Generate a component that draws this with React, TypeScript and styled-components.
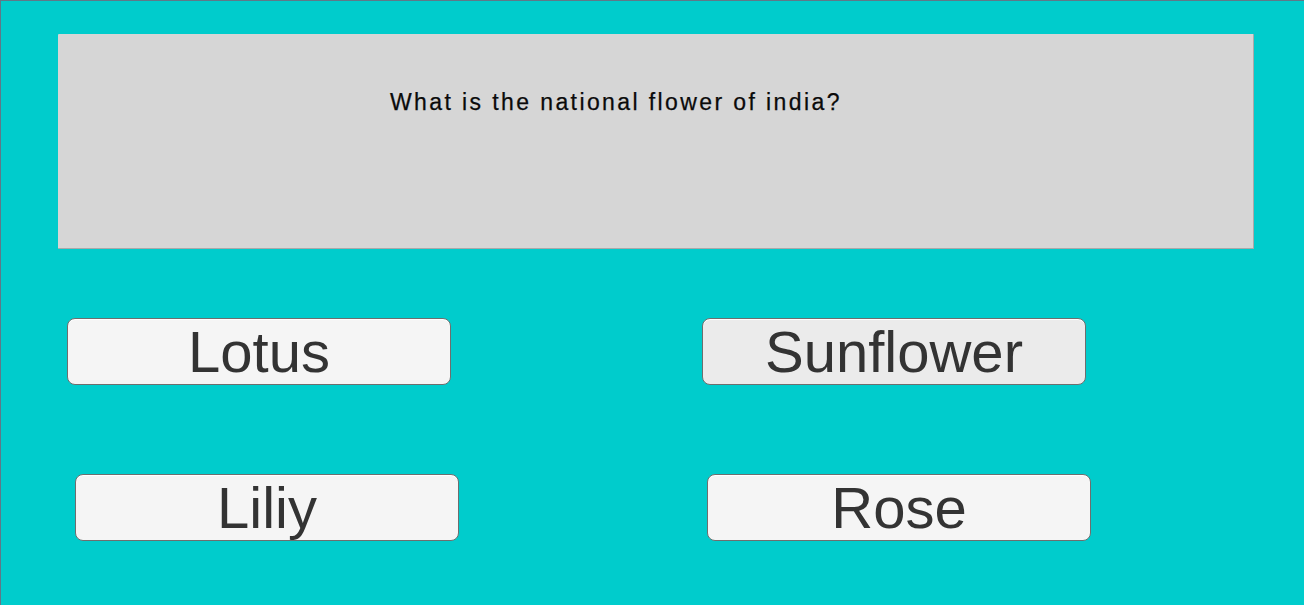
import React from "react";
import styled, { createGlobalStyle } from "styled-components";

const Global = createGlobalStyle`
  html, body { margin: 0; padding: 0; background: #00cccc; }
  #root { width: 1304px; height: 605px; }
`;

const Screen = styled.div`
  box-sizing: border-box;
  width: 1304px;
  height: 605px;
  background: #00cccc;
  border-top: 1px solid #5f7888;
  border-left: 1px solid #5f7888;
  padding: 33px 0 0 57px;
  display: flex;
  flex-direction: column;
  font-family: "Liberation Sans", Arial, sans-serif;
  overflow: hidden;
`;

const QuestionPanel = styled.div`
  box-sizing: border-box;
  width: 1196px;
  height: 215px;
  background: #d6d6d6;
  border-right: 1px solid #a9a9a9;
  border-bottom: 1px solid #a9a9a9;
  border-radius: 1px;
  padding: 55px 0 0 332px;
`;

const QuestionText = styled.div`
  font-size: 23px;
  letter-spacing: 2.4px;
  color: #0a0a0a;
  line-height: 26px;
  white-space: nowrap;
  -webkit-text-stroke: 0.25px #0a0a0a;
`;

const Answers = styled.div`
  display: flex;
  flex-direction: column;
  gap: 89px;
  margin-top: 69px;
  margin-left: -57px;
`;

const Row = styled.div<{ $indent: number; $gap: number }>`
  display: flex;
  padding-left: ${(p) => p.$indent}px;
  gap: ${(p) => p.$gap}px;
`;

const AnswerButton = styled.button<{ $hover?: boolean }>`
  box-sizing: border-box;
  width: 384px;
  height: 67px;
  padding: 0;
  border: 1px solid #6e6e6e;
  border-radius: 8px;
  background: ${(p) => (p.$hover ? "#ebebeb" : "#f5f5f5")};
  box-shadow: inset 0 1px 0 #ffffff;
  color: #333333;
  font-family: "Liberation Sans", Arial, sans-serif;
  font-size: 58px;
  line-height: 65px;
  display: flex;
  align-items: center;
  justify-content: center;
  cursor: pointer;
`;

export default function App() {
  return (
    <>
      <Global />
      <Screen>
        <QuestionPanel>
          <QuestionText>What is the national flower of india?</QuestionText>
        </QuestionPanel>
        <Answers>
          <Row $indent={66} $gap={251}>
            <AnswerButton>Lotus</AnswerButton>
            <AnswerButton $hover>Sunflower</AnswerButton>
          </Row>
          <Row $indent={74} $gap={248}>
            <AnswerButton>Liliy</AnswerButton>
            <AnswerButton>Rose</AnswerButton>
          </Row>
        </Answers>
      </Screen>
    </>
  );
}
